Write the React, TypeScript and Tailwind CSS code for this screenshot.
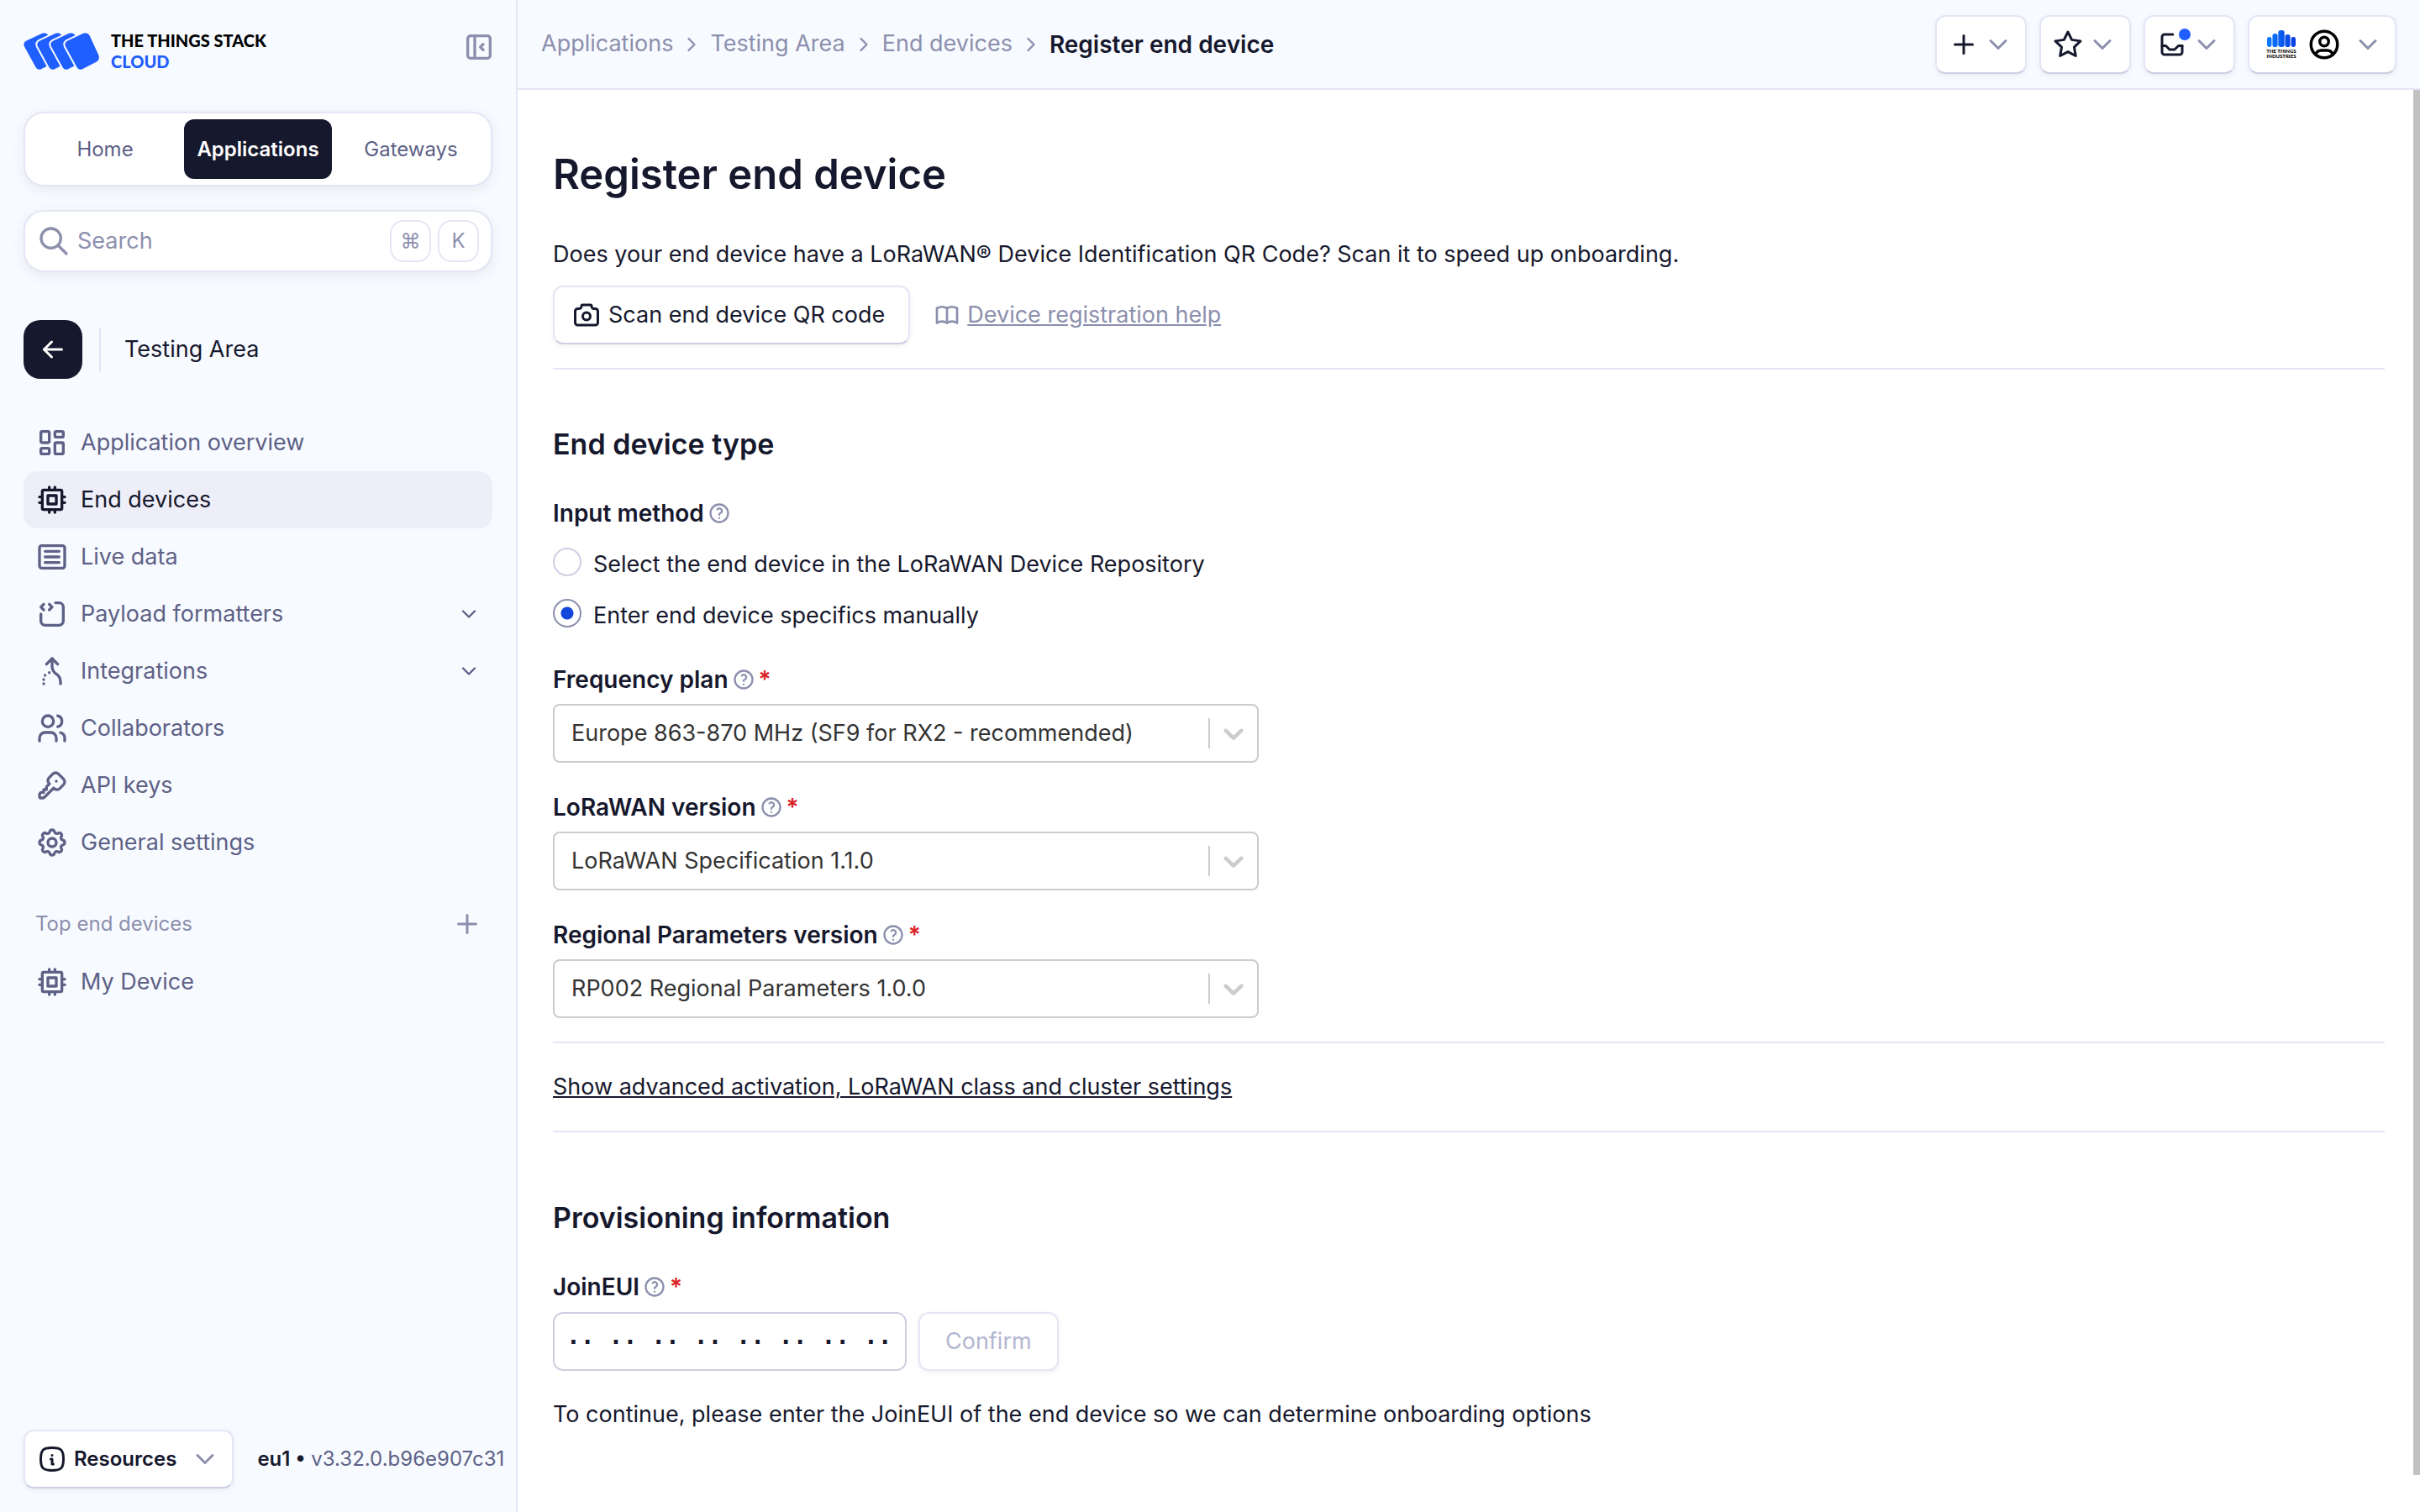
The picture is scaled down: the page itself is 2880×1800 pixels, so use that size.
import { useState } from "react";
import type { ComponentType, ReactNode } from "react";
import {
  TbArrowLeft,
  TbBook,
  TbCamera,
  TbChevronDown,
  TbChevronRight,
  TbCpu,
  TbHelp,
  TbInfoSquareRounded,
  TbKey,
  TbLayoutDashboard,
  TbLayoutSidebarLeftCollapse,
  TbPlus,
  TbSearch,
  TbSettings,
  TbSourceCode,
  TbStar,
  TbUserCircle,
  TbUsers,
} from "react-icons/tb";

type IconProps = { className?: string };

function StackLogo() {
  const card =
    "M3.5 9.5 L22 0.8 Q27 -1 29.5 3 L40.5 27 Q42 32 38 34.5 L20.5 43.4 Q16.5 45 14.5 41 L0.8 16 Q-1 12 3.5 9.5 Z";
  return (
    <svg viewBox="0 0 90 44" className="h-11 w-[90px] overflow-visible" aria-hidden="true">
      {[0, 16, 32, 49].map((x) => (
        <path
          key={x}
          d={card}
          transform={`translate(${x} 0)`}
          fill="#1f5eff"
          stroke="#f7faff"
          strokeWidth="4"
          paintOrder="stroke"
        />
      ))}
    </svg>
  );
}

function StrokeIcon({ className, children }: IconProps & { children: ReactNode }) {
  return (
    <svg
      viewBox="0 0 24 24"
      className={className}
      fill="none"
      stroke="currentColor"
      strokeWidth="2"
      strokeLinecap="round"
      strokeLinejoin="round"
      aria-hidden="true"
    >
      {children}
    </svg>
  );
}

function InboxIcon({ className }: IconProps) {
  return (
    <StrokeIcon className={className}>
      <path d="M12.5 4H6a2 2 0 0 0-2 2v12a2 2 0 0 0 2 2h12a2 2 0 0 0 2-2v-5" />
      <path d="M4 13h3l3 3h4l3-3h3" />
    </StrokeIcon>
  );
}

function LiveDataIcon({ className }: IconProps) {
  return (
    <StrokeIcon className={className}>
      <rect x="3" y="4" width="18" height="16" rx="1.5" />
      <path d="M7 8h10M7 12h10M7 16h10" />
    </StrokeIcon>
  );
}

function MergeIcon({ className }: IconProps) {
  return (
    <StrokeIcon className={className}>
      <path d="M8 7l4-4l4 4" />
      <path d="M6 21v.01M6 18.01v.01M7 15.02v.01M10 13.03v.01" />
      <path d="M12 3v5.394a6.737 6.737 0 0 0 3 5.606a6.737 6.737 0 0 1 3 5.606v1.394" />
    </StrokeIcon>
  );
}

function SelectArrow({ className }: IconProps) {
  return (
    <svg viewBox="0 0 20 20" className={className} fill="currentColor" aria-hidden="true">
      <path d="M4.516 7.548c0.436-0.446 1.043-0.481 1.576 0l3.908 3.747 3.908-3.747c0.533-0.481 1.141-0.446 1.574 0 0.436 0.445 0.408 1.197 0 1.615-0.406 0.418-4.695 4.502-4.695 4.502-0.217 0.223-0.502 0.335-0.787 0.335s-0.57-0.112-0.789-0.335c0 0-4.287-4.084-4.695-4.502s-0.436-1.17 0-1.615z" />
    </svg>
  );
}

function IndustriesLogo() {
  return (
    <span className="ml-[7px] flex w-[34px] flex-col items-center font-[Lato,sans-serif] text-[6px] leading-[6px] font-black whitespace-nowrap text-black">
      <svg viewBox="0 0 34 20" className="mb-0.5 h-5 w-[34px]" aria-hidden="true">
        <defs>
          <linearGradient id="bars" x1="0" x2="34" y1="0" y2="0" gradientUnits="userSpaceOnUse">
            <stop offset="0" stopColor="#0a7bff" />
            <stop offset="1" stopColor="#0a3ce0" />
          </linearGradient>
        </defs>
        <g fill="url(#bars)">
          <rect x="0" y="8" width="5.4" height="12" rx="2.4" />
          <rect x="6.4" y="4" width="6.2" height="16" rx="2.8" />
          <rect x="13.3" y="0" width="7.4" height="20" rx="3" />
          <rect x="21.4" y="5" width="6.2" height="15" rx="2.8" />
          <rect x="28.6" y="8" width="5.4" height="12" rx="2.4" />
        </g>
      </svg>
      <span>THE THINGS</span>
      <span>INDUSTRIES</span>
    </span>
  );
}

const raised =
  "flex h-[70px] items-center rounded-xl border-2 border-[#e4e6f5] border-b-[#cdd0e3] bg-white shadow-[0_2px_6px_rgba(0,0,0,0.06)]";

function HeaderButton({ label, children }: { label: string; children: ReactNode }) {
  return (
    <button aria-label={label} className={`${raised} gap-[5px] px-3.5 text-[#16182d]`}>
      {children}
      <TbChevronDown className="size-9 text-[#8c8fad]" />
    </button>
  );
}

type NavItem = { label: string; icon: ComponentType<IconProps>; active?: boolean; expandable?: boolean };

const navItems: NavItem[] = [
  { label: "Application overview", icon: TbLayoutDashboard },
  { label: "End devices", icon: TbCpu, active: true },
  { label: "Live data", icon: LiveDataIcon },
  { label: "Payload formatters", icon: TbSourceCode, expandable: true },
  { label: "Integrations", icon: MergeIcon, expandable: true },
  { label: "Collaborators", icon: TbUsers },
  { label: "API keys", icon: TbKey },
  { label: "General settings", icon: TbSettings },
];

function NavLink({ label, icon: Icon, active, expandable }: NavItem) {
  return (
    <a
      href="#"
      className={`flex h-[68px] items-center gap-3.5 rounded-2xl px-3.5 ${active ? "bg-[#eeeef8] text-[#16182d]" : "text-[#5d6186]"}`}
    >
      <Icon className="size-10 shrink-0" />
      <span className="grow">{label}</span>
      {expandable && <TbChevronDown className="size-7" />}
    </a>
  );
}

function Sidebar() {
  return (
    <aside className="flex w-[616px] shrink-0 flex-col border-r-2 border-[#e4e6f5] bg-[#f7faff]">
      <div className="flex items-start justify-between pt-9 pr-6 pl-7">
        <a href="#" className="flex items-center gap-3.5" aria-label="The Things Stack Cloud">
          <StackLogo />
          <span className="flex flex-col font-[Lato,sans-serif] text-xl leading-[25px] font-black text-black">
            THE THINGS STACK
            <span className="text-[#1f5eff]">CLOUD</span>
          </span>
        </a>
        <button aria-label="Collapse sidebar" className="text-[#8c8fad]">
          <TbLayoutSidebarLeftCollapse className="size-10" />
        </button>
      </div>

      <nav className="mx-7 mt-[47px] grid h-[89px] grid-cols-3 gap-1.5 rounded-3xl border-2 border-[#e4e6f5] bg-white p-[7px] text-2xl text-[#5d6186] shadow-[0_4px_16px_rgba(0,0,0,0.07)]">
        <a href="#" className="flex items-center justify-center">Home</a>
        <a href="#" className="flex items-center justify-center rounded-xl bg-[#16182d] font-semibold text-white">Applications</a>
        <a href="#" className="flex items-center justify-center">Gateways</a>
      </nav>

      <label className="mx-7 mt-7 flex h-[74px] items-center gap-2 rounded-3xl border-2 border-[#e4e6f5] bg-white px-3.5 text-[#8c8fad] shadow-[0_4px_16px_rgba(0,0,0,0.07)]">
        <TbSearch className="size-10" />
        <input type="search" placeholder="Search" aria-label="Search" className="w-0 grow outline-none placeholder:text-[#8c8fad]" />
        <kbd className="flex h-[50px] w-[49px] items-center justify-center rounded-2xl border-2 border-[#e4e6f5] font-[Inter] text-2xl">⌘</kbd>
        <kbd className="flex h-[50px] w-[49px] items-center justify-center rounded-2xl border-2 border-[#e4e6f5] font-[Inter] text-2xl">K</kbd>
      </label>

      <div className="mx-7 mt-[57px] flex h-[70px] items-center">
        <button aria-label="Back" className="flex size-[70px] items-center justify-center rounded-[20px] bg-[#16182d] text-white">
          <TbArrowLeft className="size-9" />
        </button>
        <span className="ml-5 h-[53px] w-0.5 bg-[#e4e6f5]" />
        <span className="ml-7 text-[#16182d]">Testing Area</span>
      </div>

      <nav className="mx-7 mt-[42px]">
        {navItems.map((item) => (
          <NavLink key={item.label} {...item} />
        ))}
      </nav>

      <div className="mx-7 mt-7 flex h-[70px] items-center justify-between pr-3 pl-3.5 text-2xl text-[#8c8fad]">
        Top end devices
        <button aria-label="Add end device">
          <TbPlus className="size-9" />
        </button>
      </div>
      <nav className="mx-7">
        <NavLink label="My Device" icon={TbCpu} />
      </nav>

      <div className="mt-auto mb-7 ml-7 flex items-center gap-7 whitespace-nowrap">
        <button className={`${raised} gap-2 px-3.5 text-2xl font-semibold text-[#16182d]`}>
          <TbInfoSquareRounded className="size-9" />
          Resources
          <TbChevronDown className="ml-2 size-9 text-[#8c8fad]" />
        </button>
        <span className="text-2xl text-[#5d6186]">
          <b className="font-semibold text-[#16182d]">eu1 •</b> v3.32.0.b96e907c31
        </span>
      </div>
    </aside>
  );
}

function Header() {
  return (
    <header className="flex h-[107px] shrink-0 items-center justify-between border-b-2 border-[#e4e6f5] bg-[#f7faff] px-7">
      <nav aria-label="Breadcrumb" className="flex items-center gap-2 text-[#8c8fad]">
        {["Applications", "Testing Area", "End devices"].map((crumb) => (
          <span key={crumb} className="flex items-center gap-2">
            <a href="#">{crumb}</a>
            <TbChevronRight className="size-7" />
          </span>
        ))}
        <span className="text-[28px] font-semibold text-[#16182d]">Register end device</span>
      </nav>
      <div className="flex gap-[15px]">
        <HeaderButton label="Add">
          <TbPlus className="size-9" />
        </HeaderButton>
        <HeaderButton label="Bookmarks">
          <TbStar className="size-9" />
        </HeaderButton>
        <HeaderButton label="Notifications">
          <span className="relative">
            <InboxIcon className="size-9" />
            <span className="absolute -top-px -right-1 size-3.5 rounded-full bg-[#1f5eff]" />
          </span>
        </HeaderButton>
        <HeaderButton label="Profile">
          <IndustriesLogo />
          <TbUserCircle className="mx-2 size-[42px] text-black" />
        </HeaderButton>
      </div>
    </header>
  );
}

function FieldTitle({ id, children, required }: { id: string; children: ReactNode; required?: boolean }) {
  return (
    <span className="flex items-center gap-1 text-[28px] leading-10">
      <label htmlFor={id} className="font-semibold">{children}</label>
      <TbHelp className="size-7 text-[#8c8fad]" />
      {required && <span className="font-semibold text-[#db2328]">*</span>}
    </span>
  );
}

function SelectField({ id, label, value }: { id: string; label: string; value: string }) {
  return (
    <div>
      <FieldTitle id={id} required>{label}</FieldTitle>
      <div className="relative mt-[9px] w-[840px] max-w-full">
        <select id={id} className="h-[70px] w-full appearance-none rounded-lg border-2 border-[#cccccc] bg-white px-5 text-[#333333]">
          <option>{value}</option>
        </select>
        <span className="pointer-events-none absolute inset-y-0 right-2.5 flex items-center gap-2 text-[#cccccc]">
          <span className="h-9 w-0.5 bg-[#cccccc]" />
          <SelectArrow className="size-10" />
        </span>
      </div>
    </div>
  );
}

function Rule() {
  return <hr className="border-t-2 border-[#e4e6f5]" />;
}

function RegisterForm() {
  const [method, setMethod] = useState("manual");
  const methods = [
    { id: "repository", label: "Select the end device in the LoRaWAN Device Repository" },
    { id: "manual", label: "Enter end device specifics manually" },
  ];
  return (
    <main className="grow pt-[69px] pr-[34px] pl-[42px] leading-10 text-[#16182d]">
      <h1 className="text-[49px] leading-[64px] font-semibold">Register end device</h1>
      <p className="mt-[43px]">
        Does your end device have a LoRaWAN® Device Identification QR Code? Scan it to speed up onboarding.
      </p>
      <div className="mt-[17px] mb-7 flex items-center gap-7">
        <button className={`${raised} gap-2 pr-7 pl-5`}>
          <TbCamera className="size-9" />
          Scan end device QR code
        </button>
        <a href="#" className="flex items-center gap-2 text-[#8c8fad]">
          <TbBook className="size-8" />
          <span className="underline">Device registration help</span>
        </a>
      </div>
      <Rule />

      <h2 className="mt-[67px] text-[34px] leading-[44px] font-semibold">End device type</h2>
      <fieldset className="mt-10">
        <FieldTitle id="manual">Input method</FieldTitle>
        {methods.map((m) => (
          <label key={m.id} className="mt-[21px] flex items-start gap-3.5">
            <input
              id={m.id}
              type="radio"
              name="method"
              checked={method === m.id}
              onChange={() => setMethod(m.id)}
              className="size-[34px] appearance-none rounded-full border-2 border-[#cdd0e3] bg-white checked:border-[#8c8fad] checked:bg-[radial-gradient(circle,#1347dc_7px,white_8px)]"
            />
            {m.label}
          </label>
        ))}
      </fieldset>

      <div className="mt-9 mb-7 flex flex-col gap-[33px]">
        <SelectField id="frequency" label="Frequency plan" value="Europe 863-870 MHz (SF9 for RX2 - recommended)" />
        <SelectField id="version" label="LoRaWAN version" value="LoRaWAN Specification 1.1.0" />
        <SelectField id="regional" label="Regional Parameters version" value="RP002 Regional Parameters 1.0.0" />
      </div>
      <Rule />
      <a href="#" className="my-8 block w-fit underline">
        Show advanced activation, LoRaWAN class and cluster settings
      </a>
      <Rule />

      <h2 className="mt-20 mb-10 text-[34px] leading-[44px] font-semibold">Provisioning information</h2>
      <FieldTitle id="joineui" required>JoinEUI</FieldTitle>
      <div className="mt-2.5 flex gap-3.5">
        <input
          id="joineui"
          defaultValue="·· ·· ·· ·· ·· ·· ·· ··"
          className="h-[70px] w-[421px] rounded-xl border-2 border-[#cdd0e3] bg-white px-3.5 font-['DejaVu_Sans_Mono',monospace] text-[28px] font-bold outline-none"
        />
        <button disabled className="h-[70px] rounded-xl border-2 border-[#e4e6f5] bg-white px-[30px] text-[#b3b6d0] shadow-[0_2px_6px_rgba(0,0,0,0.06)]">
          Confirm
        </button>
      </div>
      <p className="mt-8">To continue, please enter the JoinEUI of the end device so we can determine onboarding options</p>
    </main>
  );
}

export default function App() {
  return (
    <div className="flex h-screen overflow-hidden bg-white font-[Inter,sans-serif] text-[27px]">
      <Sidebar />
      <div className="flex min-w-0 grow flex-col">
        <Header />
        <div className="flex min-h-0 grow">
          <RegisterForm />
          <div className="mb-11 w-2 shrink-0 bg-[#c1c1c1]" />
        </div>
      </div>
    </div>
  );
}
